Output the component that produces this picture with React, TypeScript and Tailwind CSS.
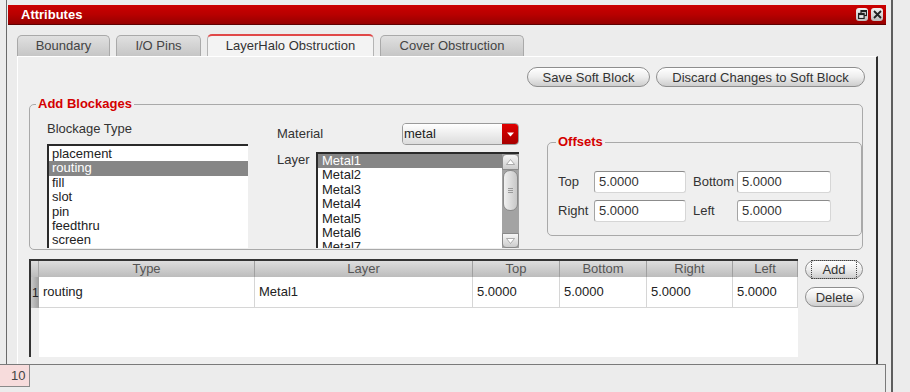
import React from "react";

const tabs = [
  { label: "Boundary", w: "w-[93px]" },
  { label: "I/O Pins", w: "w-[85px]" },
  { label: "LayerHalo Obstruction", w: "w-[167px]", active: true },
  { label: "Cover Obstruction", w: "w-[144px]" },
];

const blockageTypes = ["placement", "routing", "fill", "slot", "pin", "feedthru", "screen"];
const layers = ["Metal1", "Metal2", "Metal3", "Metal4", "Metal5", "Metal6", "Metal7"];

const columns = [
  { label: "Type", w: "w-[216px]", value: "routing" },
  { label: "Layer", w: "w-[218px]", value: "Metal1" },
  { label: "Top", w: "w-[87px]", value: "5.0000" },
  { label: "Bottom", w: "w-[87px]", value: "5.0000" },
  { label: "Right", w: "w-[86px]", value: "5.0000" },
  { label: "Left", w: "w-[65px]", value: "5.0000" },
];

const Pill = ({ className, children, focused }: { className: string; children: React.ReactNode; focused?: boolean }) => (
  <div
    className={`${className} rounded-full border border-[#8e8e8e] bg-gradient-to-b from-[#ffffff] via-[#ededed] to-[#cdcdcd] text-[13px] leading-none text-[#333] flex items-center justify-center shadow-[inset_0_1px_0_#ffffff]`}
  >
    {focused ? (
      <span className="px-[10px] py-[2px] border border-dotted border-[#444]">{children}</span>
    ) : (
      children
    )}
  </div>
);

const TitleButton = ({ children }: { children: React.ReactNode }) => (
  <div className="w-[12px] h-[13px] rounded-[3px] bg-gradient-to-b from-[#f2f2f2] to-[#bdbdbd] flex items-center justify-center">
    {children}
  </div>
);

const OffsetField = ({ value, w }: { value: string; w: string }) => (
  <div
    className={`${w} h-[22px] bg-white border border-[#d6d6d6] border-t-[#8c8c8c] border-l-[#a4a4a4] rounded-[3px] pl-[4px] flex items-center text-[13px] text-[#333]`}
  >
    {value}
  </div>
);

const Scrollbar = () => (
  <div className="w-[17px] h-full flex flex-col bg-[#a3a3a3] bg-[radial-gradient(#8c8c8c_0.6px,transparent_0.7px)] bg-[length:2px_2px]">
    <div className="h-[16px] border border-[#8a8a8a] rounded-t-[4px] bg-gradient-to-b from-[#f6f6f6] to-[#cdcdcd] flex items-center justify-center">
      <svg width="9" height="6" viewBox="0 0 9 6">
        <polygon points="4.5,0.5 8.5,5.5 0.5,5.5" fill="#ffffff" stroke="#9a9a9a" strokeWidth="0.8" />
      </svg>
    </div>
    <div className="h-[41px] mx-[1px] rounded-[7px] border border-[#8a8a8a] bg-gradient-to-r from-[#f0f0f0] to-[#c8c8c8] flex flex-col items-center justify-center gap-[1px]">
      <div className="w-[5px] h-px bg-[#9a9a9a]" />
      <div className="w-[5px] h-px bg-[#9a9a9a]" />
      <div className="w-[5px] h-px bg-[#9a9a9a]" />
    </div>
    <div className="flex-1" />
    <div className="h-[15px] border border-[#8a8a8a] rounded-b-[4px] bg-gradient-to-b from-[#f6f6f6] to-[#cdcdcd] flex items-center justify-center">
      <svg width="9" height="6" viewBox="0 0 9 6">
        <polygon points="0.5,0.5 8.5,0.5 4.5,5.5" fill="#ffffff" stroke="#9a9a9a" strokeWidth="0.8" />
      </svg>
    </div>
  </div>
);

export default function App() {
  return (
    <div className="w-[910px] h-[392px] overflow-hidden bg-[#ececec] font-['Liberation_Sans',Arial,sans-serif] text-[13px] text-[#333]">
      <div className="flex h-[364px]">
        <div className="w-[6px]" />
        <div className="w-[887px] h-full border-l border-[#6a6a6a] border-r-2 border-r-[#5e5e5e] pt-[5px]">
          {/* title bar */}
          <div className="ml-[1px] w-[878px] h-[20px] bg-gradient-to-b from-[#cc0000] via-[#b80000] to-[#960000] border-b border-[#5e0000] flex items-center pl-[13px] pr-[3px]">
            <span className="text-white font-bold text-[13px] leading-none">Attributes</span>
            <div className="ml-auto flex gap-[3px]">
              <TitleButton>
                <svg width="9" height="9" viewBox="0 0 9 9">
                  <rect x="3" y="0.5" width="5.5" height="5" fill="none" stroke="#222" strokeWidth="1.2" />
                  <rect x="3" y="0.5" width="5.5" height="1.6" fill="#222" />
                  <rect x="0.6" y="3.5" width="5.5" height="5" fill="#e8e8e8" stroke="#222" strokeWidth="1.2" />
                  <rect x="0.6" y="3.5" width="5.5" height="1.6" fill="#222" />
                </svg>
              </TitleButton>
              <TitleButton>
                <svg width="9" height="9" viewBox="0 0 9 9">
                  <path d="M1 1 L8 8 M8 1 L1 8" stroke="#222" strokeWidth="1.8" />
                </svg>
              </TitleButton>
            </div>
          </div>

          {/* tabs */}
          <div className="mt-[9px] pl-[10px] flex items-end gap-[6px] h-[22px]">
            {tabs.map((t) =>
              t.active ? (
                <div
                  key={t.label}
                  className={`${t.w} h-[22px] rounded-t-[5px] border-t-2 border-t-[#e04848] border-x border-x-[#b4b4b4] bg-[#f3f3f3] text-[#333] flex items-center justify-center`}
                >
                  {t.label}
                </div>
              ) : (
                <div
                  key={t.label}
                  className={`${t.w} h-[21px] rounded-t-[5px] border border-b-0 border-[#a9a9a9] bg-gradient-to-b from-[#e0e0e0] to-[#c6c6c6] text-[#444] flex items-center justify-center`}
                >
                  {t.label}
                </div>
              )
            )}
          </div>

          {/* panel */}
          <div className="ml-[10px] w-[861px] h-[308px] bg-[#efefef] border-t border-l border-white border-r-2 border-r-[#2e2e2e]">
            <div className="flex justify-end gap-[6px] mt-[10px] pr-[11px]">
              <Pill className="w-[123px] h-[20px]">Save Soft Block</Pill>
              <Pill className="w-[209px] h-[20px]">Discard Changes to Soft Block</Pill>
            </div>

            <fieldset className="ml-[11px] mt-[10px] w-[834px] h-[153px] border border-[#a9a9a9] rounded-[5px]">
              <legend className="ml-[6px] px-[2px] text-[13px] leading-[14px] font-bold text-[#d40000]">Add Blockages</legend>
              <div className="flex items-start">
                {/* blockage type */}
                <div className="ml-[17px] w-[201px]">
                  <div className="mt-[10px] leading-[15px]">Blockage Type</div>
                  <div className="mt-[8px] h-[104px] bg-white border-t-2 border-l-2 border-[#2a2a2a] pt-[1px] text-[#222]">
                    {blockageTypes.map((b) => (
                      <div
                        key={b}
                        className={`h-[14.4px] leading-[14.4px] pl-[3px] ${b === "routing" ? "bg-[#868686] text-white" : ""}`}
                      >
                        {b}
                      </div>
                    ))}
                  </div>
                </div>

                {/* material / layer */}
                <div className="ml-[29px] w-[245px]">
                  <div className="mt-[12px] flex items-center">
                    <div className="w-[125px]">Material</div>
                    <div className="w-[117px] h-[22px] flex rounded-[4px] border border-[#9a9a9a] overflow-hidden">
                      <div className="flex-1 bg-gradient-to-b from-[#ffffff] to-[#dcdcdc] pl-[1px] flex items-center text-[#222]">metal</div>
                      <div className="w-[16px] bg-gradient-to-b from-[#e00000] to-[#a80000] flex items-center justify-center">
                        <svg width="7" height="5" viewBox="0 0 7 5">
                          <polygon points="0,0.5 7,0.5 3.5,4.5" fill="#ffffff" />
                        </svg>
                      </div>
                    </div>
                  </div>
                  <div className="mt-[7px] flex items-start">
                    <div className="w-[39px] leading-[15px]">Layer</div>
                    <div className="w-[203px] h-[96px] flex bg-white border-t-2 border-l-2 border-[#2a2a2a] text-[#222]">
                      <div className="flex-1 overflow-hidden">
                        {layers.map((l) => (
                          <div
                            key={l}
                            className={`h-[14.4px] leading-[14.4px] pl-[4px] ${l === "Metal1" ? "bg-[#868686] text-white" : ""}`}
                          >
                            {l}
                          </div>
                        ))}
                      </div>
                      <Scrollbar />
                    </div>
                  </div>
                </div>

                {/* offsets */}
                <fieldset className="ml-[25px] mt-[24px] w-[315px] h-[101px] border border-[#a9a9a9] rounded-[5px]">
                  <legend className="ml-[8px] px-[2px] text-[13px] leading-[14px] font-bold text-[#d40000]">Offsets</legend>
                  <div className="mt-[22px] flex items-center">
                    <div className="pl-[10px] w-[46px]">Top</div>
                    <OffsetField value="5.0000" w="w-[92px]" />
                    <div className="ml-[7px] w-[44px]">Bottom</div>
                    <OffsetField value="5.0000" w="w-[94px]" />
                  </div>
                  <div className="mt-[7px] flex items-center">
                    <div className="pl-[10px] w-[46px]">Right</div>
                    <OffsetField value="5.0000" w="w-[92px]" />
                    <div className="ml-[7px] w-[44px]">Left</div>
                    <OffsetField value="5.0000" w="w-[94px]" />
                  </div>
                </fieldset>
              </div>
            </fieldset>

            {/* table */}
            <div className="ml-[11px] mt-[9px] flex items-start">
              <div className="w-[769px] h-[98px] border-t-2 border-l-2 border-[#333] bg-white flex flex-col">
                <div className="flex h-[16px] bg-gradient-to-b from-[#dedede] to-[#bcbcbc] text-[#555] leading-[16px]">
                  <div className="w-[8px] border-r border-[#a8a8a8]" />
                  {columns.map((c) => (
                    <div key={c.label} className={`${c.w} text-center border-r border-[#a0a0a0]`}>
                      {c.label}
                    </div>
                  ))}
                </div>
                <div className="flex h-[31px]">
                  <div className="w-[8px] bg-gradient-to-r from-[#c8c8c8] to-[#9e9e9e] text-[#222] text-[12px] flex items-center pl-px">1</div>
                  {columns.map((c) => (
                    <div key={c.label} className={`${c.w} border-r border-b border-[#d6d6d6] pl-[4px] flex items-center text-[#222]`}>
                      {c.value}
                    </div>
                  ))}
                </div>
                <div className="flex flex-1">
                  <div className="w-[8px] bg-[#efefef]" />
                  <div className="flex-1" />
                </div>
              </div>
              <div className="ml-[7px] flex flex-col">
                <Pill className="mt-[1px] w-[58px] h-[19px]" focused>
                  Add
                </Pill>
                <Pill className="mt-[8px] w-[59px] h-[20px]">Delete</Pill>
              </div>
            </div>
          </div>
        </div>
      </div>

      {/* status bar */}
      <div className="flex h-[28px]">
        <div className="w-[886px] border-t border-r border-[#7a7a7a] flex">
          <div className="w-[30px] h-[22px] bg-[#f7dcdc] border-r border-b border-[#8a8a8a] pl-[11px] flex items-center text-[#444]">
            10
          </div>
        </div>
        <div className="w-[5px]" />
        <div className="w-[2px] bg-[#5e5e5e]" />
      </div>
    </div>
  );
}
